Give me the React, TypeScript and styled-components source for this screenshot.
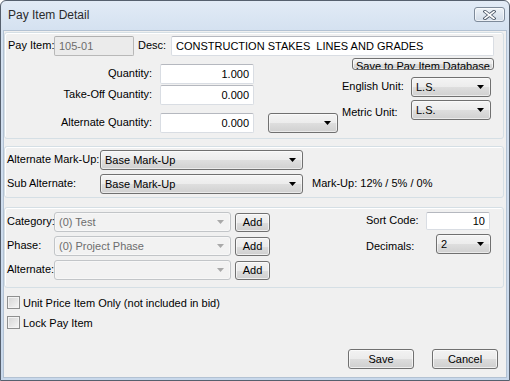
import React from "react";
import styled, { createGlobalStyle } from "styled-components";

const GlobalStyle = createGlobalStyle`
  html, body {
    margin: 0;
    padding: 0;
    background: #ffffff;
  }
  body {
    font-family: "Liberation Sans", Arial, sans-serif;
    font-size: 11px;
    color: #000000;
  }
  * {
    box-sizing: border-box;
  }
`;

const Window = styled.div`
  width: 510px;
  height: 381px;
  display: flex;
  flex-direction: column;
  border: 1px solid #56606e;
  border-radius: 6px 6px 0 0;
  background: linear-gradient(180deg, #e2ebf6 0px, #d4e1f0 30px, #c8d8eb 100%);
  padding: 0 3px 3px 3px;
  overflow: hidden;
`;

const TitleBar = styled.div`
  height: 30px;
  display: flex;
  align-items: flex-start;
  justify-content: space-between;
`;

const Title = styled.span`
  margin: 6px 0 0 4px;
  font-size: 12px;
  color: #2b2b2b;
  line-height: 16px;
`;

const CloseButton = styled.div`
  width: 31px;
  height: 15px;
  margin: 6px 1px 0 0;
  border: 1px solid #7d8a9a;
  border-radius: 3px;
  background: linear-gradient(180deg, #eef3f8 0%, #dfe7f0 50%, #d2dce8 100%);
  box-shadow: inset 0 0 0 1px rgba(255, 255, 255, 0.6);
  display: flex;
  align-items: center;
  justify-content: center;
`;

const Client = styled.div`
  flex: 1;
  display: flex;
  flex-direction: column;
  background: #f0f0f0;
  box-shadow: 0 0 0 1px #b3c2d3;
`;

const GroupBox = styled.div<{ $h: number; $mt: number; $pad: string; $row?: boolean }>`
  height: ${(p) => p.$h}px;
  margin: ${(p) => p.$mt}px 2px 0 0;
  padding: ${(p) => p.$pad};
  border: 1px solid #d5dfe5;
  border-radius: 3px;
  box-shadow: inset 1px 1px 0 #ffffff;
  display: flex;
  flex-direction: ${(p) => (p.$row ? "row" : "column")};
  align-items: flex-start;
`;

const Row = styled.div<{ $mt?: number; $top?: boolean }>`
  display: flex;
  align-items: ${(p) => (p.$top ? "flex-start" : "center")};
  margin-top: ${(p) => p.$mt ?? 0}px;
`;

const Column = styled.div<{ $mt?: number; $ml?: number; $w?: number }>`
  display: flex;
  flex-direction: column;
  margin-top: ${(p) => p.$mt ?? 0}px;
  margin-left: ${(p) => p.$ml ?? 0}px;
  width: ${(p) => (p.$w ? `${p.$w}px` : "auto")};
`;

const Label = styled.span<{ $w: number; $right?: boolean; $ml?: number; $mr?: number; $dy?: number }>`
  width: ${(p) => p.$w}px;
  margin-left: ${(p) => p.$ml ?? 0}px;
  margin-right: ${(p) => p.$mr ?? 0}px;
  text-align: ${(p) => (p.$right ? "right" : "left")};
  white-space: nowrap;
  position: relative;
  top: ${(p) => p.$dy ?? -1}px;
`;

const TextBox = styled.div<{ $w: number; $h?: number; $disabled?: boolean; $left?: boolean }>`
  width: ${(p) => p.$w}px;
  height: ${(p) => p.$h ?? 20}px;
  padding: 0 4px;
  display: flex;
  align-items: center;
  justify-content: ${(p) => (p.$left ? "flex-start" : "flex-end")};
  white-space: pre;
  overflow: hidden;
  border: 1px solid ${(p) => (p.$disabled ? "#b8b8b8" : "#d9dde3")};
  border-top-color: ${(p) => (p.$disabled ? "#b0b0b0" : "#b5b8bf")};
  border-radius: 2px;
  background: ${(p) => (p.$disabled ? "#ebebeb" : "#ffffff")};
  color: ${(p) => (p.$disabled ? "#6d6d6d" : "#000000")};
`;

const ComboBox = styled.div<{ $w: number; $h?: number; $disabled?: boolean }>`
  width: ${(p) => p.$w}px;
  height: ${(p) => p.$h ?? 20}px;
  padding: 0 6px 0 4px;
  display: flex;
  align-items: center;
  border: 1px solid ${(p) => (p.$disabled ? "#c2c5c8" : "#707070")};
  border-radius: 3px;
  background: ${(p) =>
    p.$disabled
      ? "#f2f2f2"
      : "linear-gradient(180deg, #f4f4f4 0%, #ececec 50%, #dedede 51%, #d0d0d0 100%)"};
  box-shadow: inset 0 0 0 1px ${(p) => (p.$disabled ? "#f7f7f7" : "rgba(255,255,255,0.55)")};
  color: ${(p) => (p.$disabled ? "#6d6d6d" : "#000000")};
`;

const ComboText = styled.span`
  flex: 1;
  white-space: nowrap;
  overflow: hidden;
`;

const Button = styled.div<{ $w: number; $h?: number; $ml?: number; $mt?: number }>`
  width: ${(p) => p.$w}px;
  height: ${(p) => p.$h ?? 20}px;
  margin-left: ${(p) => p.$ml ?? 0}px;
  margin-top: ${(p) => p.$mt ?? 0}px;
  border: 1px solid #707070;
  border-radius: 3px;
  background: linear-gradient(180deg, #f2f2f2 0%, #ebebeb 50%, #dddddd 51%, #cfcfcf 100%);
  box-shadow: inset 0 0 0 1px rgba(255, 255, 255, 0.65);
  display: flex;
  align-items: center;
  justify-content: center;
  white-space: nowrap;
`;

/* the database button is shorter than its text, so the descenders get cut */
const ClippedButton = styled(Button)`
  align-self: flex-end;
  align-items: flex-start;
  overflow: hidden;
  padding-top: 1px;
  line-height: 12px;
`;

const MarkUpText = styled.span`
  margin-left: 9px;
  position: relative;
  top: -1px;
`;

const CheckArea = styled.div`
  display: flex;
  flex-direction: column;
  gap: 7px;
  margin-top: 8px;
  padding-left: 3px;
`;

const CheckRow = styled.label`
  display: flex;
  align-items: center;
  height: 13px;
`;

const CheckBox = styled.span`
  width: 13px;
  height: 13px;
  border: 1px solid #8e8f8f;
  background: linear-gradient(135deg, #d4d4d4 0%, #f6f6f6 100%);
  box-shadow: inset 0 0 0 1px #f3f3f3;
  margin-right: 3px;
`;

const ButtonBar = styled.div`
  margin-top: auto;
  display: flex;
  justify-content: flex-end;
  gap: 18px;
  padding: 0 8px 8px 0;
`;

const Arrow = ({ disabled }: { disabled?: boolean }) => (
  <svg width="7" height="4" viewBox="0 0 7 4">
    <path d="M0 0H7L3.5 4Z" fill={disabled ? "#a9a9a9" : "#000000"} />
  </svg>
);

const Combo = ({
  w,
  h,
  value,
  disabled,
}: {
  w: number;
  h?: number;
  value?: string;
  disabled?: boolean;
}) => (
  <ComboBox $w={w} $h={h} $disabled={disabled}>
    <ComboText>{value}</ComboText>
    <Arrow disabled={disabled} />
  </ComboBox>
);

const CloseGlyph = () => (
  <svg width="13" height="10" viewBox="0 0 13 10">
    <path d="M2 1.5L11 8.5M11 1.5L2 8.5" stroke="#4c5868" strokeWidth="3.4" strokeLinecap="square" />
    <path d="M2 1.5L11 8.5M11 1.5L2 8.5" stroke="#ffffff" strokeWidth="1.6" strokeLinecap="square" />
  </svg>
);

const categoryRows = [
  { label: "Category:", value: "(0) Test" },
  { label: "Phase:", value: "(0) Project Phase" },
  { label: "Alternate:", value: "" },
];

const App = () => {
  return (
    <>
      <GlobalStyle />
      <Window>
        <TitleBar>
          <Title>Pay Item Detail</Title>
          <CloseButton>
            <CloseGlyph />
          </CloseButton>
        </TitleBar>
        <Client>
          <GroupBox $h={107} $mt={1} $pad="3px 0 0 3px">
            <Row>
              <Label $w={46}>Pay Item:</Label>
              <TextBox $w={80} $disabled $left>
                105-01
              </TextBox>
              <Label $w={33} $ml={4}>
                Desc:
              </Label>
              <TextBox $w={323} $left>
                CONSTRUCTION STAKES  LINES AND GRADES
              </TextBox>
            </Row>
            <Row $top>
              <Column $mt={8}>
                <Row>
                  <Label $w={144} $mr={8} $right>
                    Quantity:
                  </Label>
                  <TextBox $w={94}>1.000</TextBox>
                </Row>
                <Row $mt={1}>
                  <Label $w={144} $mr={8} $right>
                    Take-Off Quantity:
                  </Label>
                  <TextBox $w={94}>0.000</TextBox>
                </Row>
                <Row $mt={8}>
                  <Label $w={144} $mr={8} $right>
                    Alternate Quantity:
                  </Label>
                  <TextBox $w={94}>0.000</TextBox>
                  <Column $ml={14}>
                    <Combo w={70} />
                  </Column>
                </Row>
              </Column>
              <Column $ml={4} $w={152}>
                <ClippedButton $w={142} $h={12} $mt={2}>
                  Save to Pay Item Database
                </ClippedButton>
                <Row $mt={7}>
                  <Label $w={69}>English Unit:</Label>
                  <Combo w={80} value="L.S." />
                </Row>
                <Row $mt={3}>
                  <Label $w={69} $dy={2}>
                    Metric Unit:
                  </Label>
                  <Combo w={80} value="L.S." />
                </Row>
              </Column>
            </Row>
          </GroupBox>

          <GroupBox $h={52} $mt={7} $pad="3px 0 0 2px">
            <Row>
              <Label $w={93}>Alternate Mark-Up:</Label>
              <Combo w={203} value="Base Mark-Up" />
            </Row>
            <Row $mt={4}>
              <Label $w={93}>Sub Alternate:</Label>
              <Combo w={203} value="Base Mark-Up" />
              <MarkUpText>Mark-Up: 12% / 5% / 0%</MarkUpText>
            </Row>
          </GroupBox>

          <GroupBox $h={81} $mt={9} $pad="4px 0 0 2px" $row>
            <Column>
              {categoryRows.map((r, i) => (
                <Row key={r.label} $mt={i === 0 ? 0 : 4}>
                  <Label $w={47}>{r.label}</Label>
                  <Combo w={177} value={r.value} disabled />
                  <Button $w={35} $h={19} $ml={4}>
                    Add
                  </Button>
                </Row>
              ))}
            </Column>
            <Column $ml={96}>
              <Row>
                <Label $w={60}>Sort Code:</Label>
                <TextBox $w={64} $h={18}>
                  10
                </TextBox>
              </Row>
              <Row $mt={4}>
                <Label $w={70} $dy={2}>
                  Decimals:
                </Label>
                <Combo w={55} value="2" />
              </Row>
            </Column>
          </GroupBox>

          <CheckArea>
            <CheckRow>
              <CheckBox />
              Unit Price Item Only (not included in bid)
            </CheckRow>
            <CheckRow>
              <CheckBox />
              Lock Pay Item
            </CheckRow>
          </CheckArea>

          <ButtonBar>
            <Button $w={66}>Save</Button>
            <Button $w={66}>Cancel</Button>
          </ButtonBar>
        </Client>
      </Window>
    </>
  );
};

export default App;
